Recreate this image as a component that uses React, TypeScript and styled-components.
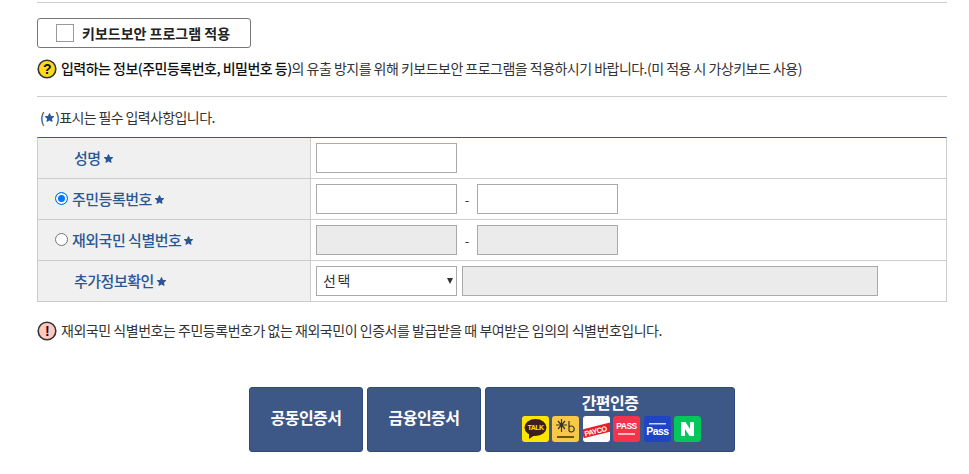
import React from "react";
import styled, { createGlobalStyle } from "styled-components";

const Global = createGlobalStyle`
  html, body { margin: 0; padding: 0; background: #fff; }
  body { font-family: "Noto Sans CJK KR", "Noto Sans", sans-serif; color: #333; overflow: hidden; }
`;

const Page = styled.div`
  width: 969px;
  height: 474px;
  box-sizing: border-box;
  padding: 2px 22px 0 37px;
`;
const Rule = styled.div`
  height: 1px;
  background: #ccc;
`;
const KeyBox = styled.label`
  margin-top: 15px;
  width: 214px;
  height: 30px;
  box-sizing: border-box;
  border: 1px solid #777;
  border-radius: 3px;
  display: flex;
  align-items: center;
  padding-left: 18px;
  gap: 8px;
  font-size: 14px;
  font-weight: 700;
  color: #222;
`;
const Square = styled.span`
  width: 18px;
  height: 18px;
  box-sizing: border-box;
  border: 1px solid #999;
  background: #fff;
`;
const MessageText = styled.span`
  padding-bottom: 2px;
`;
const Notice = styled.div`
  margin-top: 11px;
  height: 20px;
  display: flex;
  align-items: center;
  gap: 4px;
  font-size: 14px;
  letter-spacing: -0.52px;
  color: #333;
  white-space: nowrap;
  b { font-weight: 500; color: #111; }
`;
const NoticeRule = styled(Rule)`
  margin-top: 17px;
`;
const Required = styled.div`
  margin: 11px 0 0 3px;
  height: 18px;
  line-height: 18px;
  font-size: 14px;
  letter-spacing: -0.62px;
  color: #333;
  display: flex;
  align-items: center;
  gap: 1px;
`;
const Table = styled.div`
  margin-top: 11px;
  border-top: 1px solid #2f5a9e;
  border-left: 1px solid #ccc;
  border-right: 1px solid #ccc;
  display: grid;
  grid-template-columns: 273px 1fr;
`;
const Head = styled.div<{ $indent: number }>`
  height: 41px;
  box-sizing: border-box;
  background: #f0f0f0;
  border-right: 1px solid #ccc;
  border-bottom: 1px solid #ccc;
  display: flex;
  align-items: center;
  padding: 0 0 2px ${(p) => p.$indent}px;
  font-size: 15px;
  font-weight: 500;
  color: #2b5797;
  letter-spacing: -0.5px;
  white-space: nowrap;
`;
const Star = styled.span`
  margin: 2px 0 0 3px;
  color: #2b5797;
  display: inline-flex;
`;
const Radio = styled.span<{ $on?: boolean }>`
  width: 13px;
  height: 13px;
  box-sizing: border-box;
  border-radius: 50%;
  border: 1px solid ${(p) => (p.$on ? "#0075ff" : "#767676")};
  background: ${(p) => (p.$on ? "#0075ff" : "#fff")};
  box-shadow: ${(p) => (p.$on ? "inset 0 0 0 2px #fff" : "none")};
  margin-right: 4px;
  flex: none;
`;
const Cell = styled.div`
  height: 41px;
  box-sizing: border-box;
  border-bottom: 1px solid #ccc;
  display: flex;
  align-items: center;
  padding-left: 5px;
`;
const Field = styled.div<{ $off?: boolean; $w?: number }>`
  width: ${(p) => p.$w ?? 141}px;
  height: 30px;
  box-sizing: border-box;
  border: 1px solid #aaa;
  background: ${(p) => (p.$off ? "#ebebeb" : "#fff")};
`;
const Dash = styled.span`
  width: 20px;
  text-align: center;
  font-size: 13px;
  color: #333;
`;
const Select = styled.div`
  width: 141px;
  height: 30px;
  box-sizing: border-box;
  border: 1px solid #aaa;
  background: #fff;
  display: flex;
  align-items: center;
  justify-content: space-between;
  padding: 0 3px 0 6px;
  font-size: 14px;
  letter-spacing: 1.5px;
  color: #333;
  margin-right: 5px;
`;
const SelectLabel = styled.span`
  padding-bottom: 2px;
`;
const Caret = styled.span`
  width: 0;
  height: 0;
  border-left: 3px solid transparent;
  border-right: 3px solid transparent;
  border-top: 6px solid #333;
`;
const Warn = styled.div`
  margin-top: 19px;
  height: 20px;
  display: flex;
  align-items: center;
  gap: 4px;
  font-size: 14px;
  letter-spacing: -0.47px;
  color: #333;
  white-space: nowrap;
`;
const Buttons = styled.div`
  margin: 46px 0 0 212px;
  display: flex;
  gap: 4px;
`;
const Btn = styled.div<{ $w: number }>`
  width: ${(p) => p.$w}px;
  height: 65px;
  box-sizing: border-box;
  background: #3d5787;
  border: 1px solid #2c4a80;
  border-radius: 3px;
  color: #fff;
  font-size: 16px;
  font-weight: 700;
  display: flex;
  flex-direction: column;
  align-items: center;
  justify-content: center;
  letter-spacing: -0.55px;
`;
const PlainLabel = styled.span`
  margin-bottom: 6px;
`;
const EasyTitle = styled.span`
  line-height: 18px;
  margin-top: -4px;
`;
const Logos = styled.div`
  display: flex;
  gap: 3.5px;
  margin: 5px 0 0 3px;
`;

const Bubble = ({ bg, children }: { bg: string; children: string }) => (
  <svg width="20" height="20" viewBox="0 0 20 20" style={{ flex: "none" }}>
    <circle cx="10" cy="10" r="8.8" fill={bg} stroke="#333" strokeWidth="1.6" />
    <text x="10" y="15" textAnchor="middle" fontSize="14" fontWeight="700" fill="#111" fontFamily="Liberation Sans">{children}</text>
  </svg>
);

const StarIcon = () => (
  <svg width="9" height="9" viewBox="0 0 24 24" fill="#2b5797" stroke="#2b5797" strokeWidth="3" strokeLinejoin="round">
    <path d="M12 2l3 7 7.5.7-5.7 5 1.8 7.3-6.6-4-6.6 4 1.8-7.3-5.7-5L9 9z" />
  </svg>
);

const Tile = ({ bg, children }: { bg: string; children: React.ReactNode }) => (
  <svg width="27" height="26" viewBox="0 0 27 26">
    <rect width="27" height="26" rx="3" fill={bg} />
    {children}
  </svg>
);

const L = "Liberation Sans";

const Req = () => (
  <Star>
    <StarIcon />
  </Star>
);

export default function App() {
  return (
    <Page>
      <Global />
      <Rule />
      <KeyBox>
        <Square />
        키보드보안 프로그램 적용
      </KeyBox>
      <Notice>
        <Bubble bg="#ffd91a">?</Bubble>
        <MessageText>
          <b>입력하는 정보(주민등록번호, 비밀번호 등)</b>의 유출 방지를 위해 키보드보안 프로그램을 적용하시기 바랍니다.(미 적용 시 가상키보드 사용)
        </MessageText>
      </Notice>
      <NoticeRule />
      <Required>
        (<StarIcon />)표시는 필수 입력사항입니다.
      </Required>
      <Table>
        <Head $indent={36}>성명<Req /></Head>
        <Cell><Field /></Cell>
        <Head $indent={17}><Radio $on />주민등록번호<Req /></Head>
        <Cell><Field /><Dash>-</Dash><Field /></Cell>
        <Head $indent={17}><Radio />재외국민 식별번호<Req /></Head>
        <Cell><Field $off /><Dash>-</Dash><Field $off /></Cell>
        <Head $indent={36}>추가정보확인<Req /></Head>
        <Cell>
          <Select><SelectLabel>선택</SelectLabel><Caret /></Select>
          <Field $off $w={416} />
        </Cell>
      </Table>
      <Warn>
        <Bubble bg="#ffc9c2">!</Bubble>
        <MessageText>재외국민 식별번호는 주민등록번호가 없는 재외국민이 인증서를 발급받을 때 부여받은 임의의 식별번호입니다.</MessageText>
      </Warn>
      <Buttons>
        <Btn $w={114}><PlainLabel>공동인증서</PlainLabel></Btn>
        <Btn $w={114}><PlainLabel>금융인증서</PlainLabel></Btn>
        <Btn $w={250}>
          <EasyTitle>간편인증</EasyTitle>
          <Logos>
            <Tile bg="#fee500">
              <ellipse cx="13.5" cy="11.5" rx="11" ry="8.5" fill="#3c1e1e" />
              <path d="M7 17l0 6 6-4z" fill="#3c1e1e" />
              <text x="13.5" y="14" textAnchor="middle" fontSize="7" fontWeight="700" fill="#fee500" fontFamily={L}>TALK</text>
            </Tile>
            <Tile bg="#f9c846">
              <path d="M6 5l7 8M13 5l-7 8M9.5 3v13M4 9h11M17 5v10M17 11a3 3 0 1 1 0 4" stroke="#333" strokeWidth="1.2" fill="none" />
              <rect x="5" y="20" width="17" height="2" fill="#6b5316" />
            </Tile>
            <Tile bg="#fff">
              <g transform="rotate(-14 13.5 14)">
                <rect x="-1" y="10" width="30" height="9" fill="#e8202a" />
                <text x="1" y="17.5" fontSize="7.5" fontWeight="700" fill="#fff" fontFamily={L}>PAYCO</text>
              </g>
            </Tile>
            <Tile bg="#f5334b">
              <text x="13.5" y="13" textAnchor="middle" fontSize="8.5" fontWeight="700" fill="#fff" fontFamily={L}>PASS</text>
              <rect x="5" y="17" width="17" height="2" fill="#fbb" />
            </Tile>
            <Tile bg="#1f45c4">
              <rect x="5" y="7" width="17" height="1.5" fill="#cdd6f5" />
              <text x="13.5" y="19" textAnchor="middle" fontSize="10.5" fontWeight="700" fill="#fff" fontFamily={L}>Pass</text>
            </Tile>
            <Tile bg="#03c75a">
              <path d="M7 6h4.5l4.5 7V6h4v14h-4.5L11 13v7H7z" fill="#fff" />
            </Tile>
          </Logos>
        </Btn>
      </Buttons>
    </Page>
  );
}
